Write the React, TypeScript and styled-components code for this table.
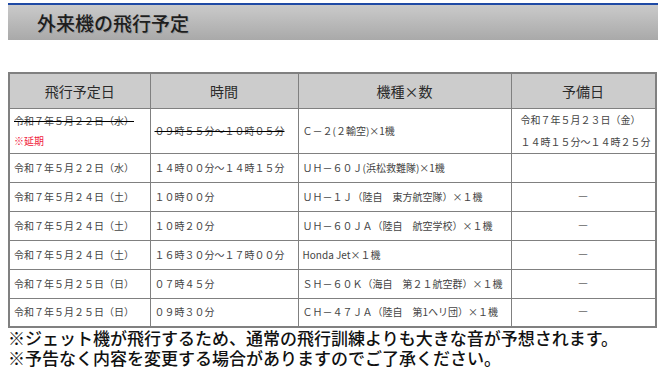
import React from 'react';
import styled, { createGlobalStyle } from 'styled-components';

const GlobalStyle = createGlobalStyle`
  body {
    margin: 0;
    background: #fff;
    font-family: "Noto Sans CJK JP", "Noto Sans", sans-serif;
  }
  *, *::before, *::after {
    box-sizing: border-box;
  }
`;

const Page = styled.div`
  padding: 3px 0 0 8px;
`;

const TitleBar = styled.h2`
  margin: 0;
  height: 37px;
  border-top: 2px solid #1f4aa5;
  background: linear-gradient(#cacaca, #a9a9a9);
  display: flex;
  align-items: center;
  padding-left: 29px;
  font-size: 19px;
  font-weight: 500;
  color: #1e1e1e;
  text-shadow: 1px 1px 0 rgba(0, 0, 0, 0.15);
`;

const Table = styled.table`
  margin-top: 32px;
  border-collapse: collapse;
  border: 2px solid #808080;
  table-layout: fixed;
`;

const Th = styled.th<{ $w: number }>`
  width: ${(p) => p.$w}px;
  height: 35px;
  background: #cccccc;
  border: 1px solid #808080;
  font-size: 14px;
  font-weight: 400;
  color: #2a2a2a;
  text-align: center;
  padding: 0;
`;

const Td = styled.td<{ $center?: boolean }>`
  height: 29px;
  border: 1px solid #808080;
  padding: 0 4px;
  font-size: 10px;
  line-height: 14px;
  color: #444;
  text-align: ${(p) => (p.$center ? 'center' : 'left')};
  vertical-align: middle;
  white-space: nowrap;
  overflow: hidden;
`;

const TallTd = styled(Td)`
  height: 43px;
`;

const Struck = styled.span`
  display: block;
  text-decoration: line-through;
  text-decoration-color: #000;
  color: #444;
`;

const Delay = styled.span`
  display: block;
  margin-top: 6px;
  color: #f01a3c;
`;

const Line = styled.span`
  display: block;
  line-height: 22px;
  padding-left: 5px;
`;

const Dash = styled.span`
  color: #222;
`;

const Notes = styled.div`
  font-size: 17px;
  line-height: 20px;
  font-weight: 500;
  color: #111;
`;

const rows = [
  ['令和７年５月２２日（水）', '１４時００分～１４時１５分', 'ＵＨ－６０Ｊ(浜松救難隊)×1機', ''],
  ['令和７年５月２４日（土）', '１０時００分', 'ＵＨ－１Ｊ（陸自　東方航空隊）×１機', '―'],
  ['令和７年５月２４日（土）', '１０時２０分', 'ＵＨ－６０ＪＡ（陸自　航空学校）×１機', '―'],
  ['令和７年５月２４日（土）', '１６時３０分～１７時００分', 'Honda Jet×１機', '―'],
  ['令和７年５月２５日（日）', '０７時４５分', 'ＳＨ－６０Ｋ（海自　第２１航空群）×１機', '―'],
  ['令和７年５月２５日（日）', '０９時３０分', 'ＣＨ－４７ＪＡ（陸自　第1ヘリ団）×１機', '―'],
];

const App = () => {
  return (
    <Page>
      <GlobalStyle />
      <TitleBar>外来機の飛行予定</TitleBar>
      <Table>
        <thead>
          <tr>
            <Th $w={141}>飛行予定日</Th>
            <Th $w={148}>時間</Th>
            <Th $w={213}>機種×数</Th>
            <Th $w={138}>予備日</Th>
          </tr>
        </thead>
        <tbody>
          <tr>
            <TallTd>
              <Struck>令和７年５月２２日（水）</Struck>
              <Delay>※延期</Delay>
            </TallTd>
            <TallTd>
              <Struck>０９時５５分～１０時０５分</Struck>
            </TallTd>
            <TallTd>Ｃ－２(２輸空)×1機</TallTd>
            <TallTd>
              <Line>令和７年５月２３日（金）</Line>
              <Line>１４時１５分～１４時２５分</Line>
            </TallTd>
          </tr>
          {rows.map((r, i) => (
            <tr key={i}>
              <Td>{r[0]}</Td>
              <Td>{r[1]}</Td>
              <Td>{r[2]}</Td>
              <Td $center>
                <Dash>{r[3]}</Dash>
              </Td>
            </tr>
          ))}
        </tbody>
      </Table>
      <Notes>
        <div>※ジェット機が飛行するため、通常の飛行訓練よりも大きな音が予想されます。</div>
        <div>※予告なく内容を変更する場合がありますのでご了承ください。</div>
      </Notes>
    </Page>
  );
};

export default App;
